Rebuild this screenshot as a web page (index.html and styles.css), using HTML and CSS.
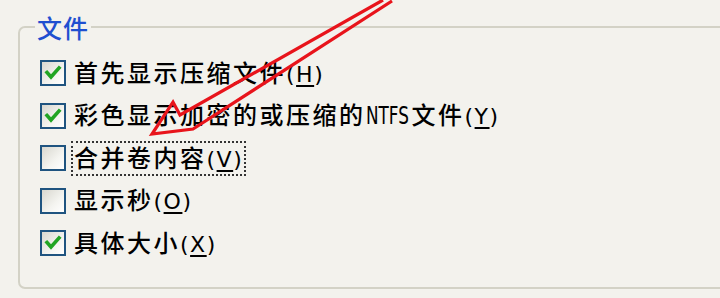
FILE: index.html
```html
<!DOCTYPE html>
<html lang="zh-CN">
<head>
<meta charset="utf-8">
<title>文件</title>
<link rel="stylesheet" href="styles.css">
</head>
<body>
<fieldset class="group">
  <legend class="group-title">文件</legend>
  <ul class="options">
    <li class="option">
      <span class="box checked"><svg viewBox="0 0 22 22" width="22" height="22"><polyline points="5,10.5 9,15 17,6" /></svg></span>
      <span class="label">首先显示压缩文件<span class="key">(<u>H</u>)</span></span>
    </li>
    <li class="option">
      <span class="box checked"><svg viewBox="0 0 22 22" width="22" height="22"><polyline points="5,10.5 9,15 17,6" /></svg></span>
      <span class="label">彩色显示加密的或压缩的<span class="lat"><span class="lat-inner">NTFS</span></span>文件<span class="key">(<u>Y</u>)</span></span>
    </li>
    <li class="option">
      <span class="box"></span>
      <span class="label focus">合并卷内容<span class="key">(<u>V</u>)</span></span>
    </li>
    <li class="option">
      <span class="box"></span>
      <span class="label">显示秒<span class="key">(<u>O</u>)</span></span>
    </li>
    <li class="option">
      <span class="box checked"><svg viewBox="0 0 22 22" width="22" height="22"><polyline points="5,10.5 9,15 17,6" /></svg></span>
      <span class="label">具体大小<span class="key">(<u>X</u>)</span></span>
    </li>
  </ul>
</fieldset>
<svg class="annotation" width="720" height="298" viewBox="0 0 720 298">
  <polyline points="383,0 180,115 173,102 152,134 193,129 392,1" />
</svg>
</body>
</html>
```

FILE: styles.css
```css
html, body {
  margin: 0;
  padding: 0;
}
body {
  width: 720px;
  height: 298px;
  overflow: hidden;
  background: #f3f2ed;
  position: relative;
  padding-top: 14px;
  box-sizing: border-box;
  font-family: "Liberation Sans", "Noto Sans CJK SC", sans-serif;
  color: #000;
}
.group {
  margin: 0 0 0 18px;
  width: 760px;
  height: 275px;
  box-sizing: border-box;
  padding: 0;
  border: 2px solid #d3d2c6;
  border-radius: 7px;
}
.group-title {
  margin-left: 15px;
  padding: 0 2px;
  font-family: "Noto Sans CJK SC", sans-serif;
  font-size: 25px;
  font-weight: 500;
  letter-spacing: 1px;
  line-height: 26px;
  color: #1f4fd0;
}
.options {
  list-style: none;
  margin: 0;
  padding: 12px 0 0 20px;
}
.option {
  display: flex;
  align-items: center;
  height: 42.5px;
}
.box {
  width: 26px;
  height: 26px;
  box-sizing: border-box;
  border: 2px solid #1f5480;
  background: linear-gradient(135deg, #d8d7cf 0%, #f4f4f0 60%, #ffffff 100%);
  display: flex;
  align-items: center;
  justify-content: center;
  flex: none;
}
.box svg polyline {
  fill: none;
  stroke: #21a523;
  stroke-width: 3.6;
  stroke-linecap: square;
  stroke-linejoin: miter;
}
.label {
  margin-left: 5px;
  padding: 0 1px;
  border: 2px dotted transparent;
  font-family: "Noto Sans CJK SC", sans-serif;
  font-size: 24px;
  font-weight: 500;
  letter-spacing: 2.5px;
  line-height: 28px;
  white-space: nowrap;
}
.label.focus {
  border-color: #333;
}
.lat {
  display: inline-block;
  width: 46px;
  vertical-align: baseline;
  font-family: "DejaVu Sans", sans-serif;
  font-size: 24px;
  letter-spacing: 0;
}
.lat-inner {
  display: inline-block;
  transform: scaleX(0.7);
  transform-origin: left center;
}
.key {
  font-family: "DejaVu Sans", sans-serif;
  font-size: 22px;
  letter-spacing: 1.5px;
}
.key u {
  text-underline-offset: 3px;
}
.annotation {
  position: absolute;
  left: 0;
  top: 0;
  pointer-events: none;
}
.annotation polyline {
  fill: none;
  stroke: #e8141b;
  stroke-width: 3.2;
  stroke-linejoin: miter;
}
```
